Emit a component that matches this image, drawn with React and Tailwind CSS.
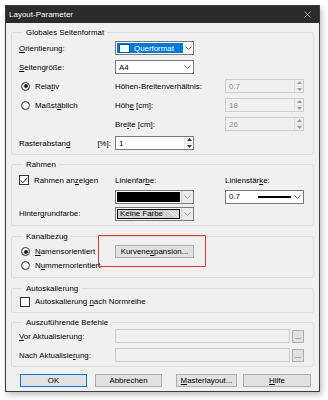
import { X } from "lucide-react";

const Chevron = ({ muted }) => (
  <svg width="7" height="4" viewBox="0 0 7 4" className="block">
    <polyline points="0.5,0.5 3.5,3.5 6.5,0.5" fill="none" stroke={muted ? "#9a9a9a" : "#606060"} strokeWidth="1" />
  </svg>
);

const Arrows = ({ disabled }) => (
  <div className={`flex h-full w-[9px] flex-col border-l ${disabled ? "border-[#dcdcdc]" : "border-[#e3e3e3]"}`}>
    <div className="flex flex-1 items-center justify-center border-b border-[#e3e3e3]">
      <svg width="5" height="3" viewBox="0 0 5 3"><polygon points="0,3 2.5,0 5,3" fill={disabled ? "#9a9a9a" : "#333"} /></svg>
    </div>
    <div className="flex flex-1 items-center justify-center">
      <svg width="5" height="3" viewBox="0 0 5 3"><polygon points="0,0 2.5,3 5,0" fill={disabled ? "#9a9a9a" : "#333"} /></svg>
    </div>
  </div>
);

const Spin = ({ value, disabled }) => (
  <div
    className={`flex h-[14px] w-[79px] items-center border ${
      disabled ? "border-[#cccccc] bg-[#f0f0f0] text-[#8d8d8d]" : "border-[#7a7a7a] bg-white text-black"
    }`}
  >
    <span className="flex-1 pl-[3px]">{value}</span>
    <Arrows disabled={disabled} />
  </div>
);

const Combo = ({ children, muted }) => (
  <div className="flex h-[14px] w-[79px] items-center border border-[#7a7a7a] bg-white">
    <div className="flex h-full flex-1 items-center p-[1px]">{children}</div>
    <div className={`flex h-full w-[12px] items-center justify-center ${muted ? "border-l border-[#cccccc] bg-[#ececec]" : ""}`}>
      <Chevron muted={muted} />
    </div>
  </div>
);

const Radio = ({ checked, children }) => (
  <div className="flex items-center gap-[5px]">
    <span className="flex h-[9px] w-[9px] items-center justify-center rounded-full border border-[#333] bg-white">
      {checked ? <span className="h-[4px] w-[4px] rounded-full bg-[#222]" /> : null}
    </span>
    <span>{children}</span>
  </div>
);

const Check = ({ checked, children }) => (
  <div className="flex items-center gap-[5px]">
    <span className="flex h-[10px] w-[10px] items-center justify-center border border-[#333] bg-white">
      {checked ? (
        <svg width="8" height="7" viewBox="0 0 8 7">
          <polyline points="0.7,3.6 2.9,5.8 7.3,0.8" fill="none" stroke="#222" strokeWidth="1" />
        </svg>
      ) : null}
    </span>
    <span>{children}</span>
  </div>
);

const Group = ({ title, className, children }) => (
  <fieldset className={`rounded-[2px] border border-[#dcdcdc] px-[7px] ${className}`}>
    <legend className="ml-[4px] px-[3px] leading-[11px]">{title}</legend>
    {children}
  </fieldset>
);

const Button = ({ children, primary, className }) => (
  <div
    className={`flex h-[13px] items-center justify-center border bg-[#e1e1e1] ${
      primary ? "border-[#0078d7]" : "border-[#adadad]"
    } ${className}`}
  >
    {children}
  </div>
);

export default function App() {
  return (
    <div className="h-[400px] w-[328px] overflow-hidden bg-white pl-[5px] pt-[5px] font-['Liberation_Sans',Arial,sans-serif] text-[7.9px] leading-[11px] text-[#000]">
      <div className="flex h-[387px] w-[315px] flex-col border border-[#3c3c3c] bg-[#f0f0f0] shadow-[2px_3px_6px_rgba(0,0,0,0.25)]">
        <div className="flex h-[17px] items-center justify-between bg-[#2b2b2b] pl-[3px] pr-[6px] text-[8px] text-white">
          <span>Layout-Parameter</span>
          <X size={11} strokeWidth={1.2} />
        </div>

        <div className="flex flex-1 flex-col px-[5px] pt-[4px]">
          <Group title="Globales Seitenformat" className="pb-[4px] pt-[3px]">
            <div className="grid grid-cols-[96px_110px_79px] grid-rows-[14px_14px_14px_14px_14px_14px] items-center gap-y-[5px]">
              <span><u>O</u>rientierung:</span>
              <Combo>
                <div className="flex h-full w-[66px] items-center gap-[4px] bg-[#0078d7] pl-[2px] text-white">
                  <span className="h-[9px] w-[11px] border border-[#005a9e] bg-white" />
                  <span>Querformat</span>
                </div>
              </Combo>
              <span />

              <span><u>S</u>eitengröße:</span>
              <Combo>
                <span className="pl-[2px]">A4</span>
              </Combo>
              <span />

              <div className="pl-[2px]">
                <Radio checked>
                  Rela<u>t</u>iv
                </Radio>
              </div>
              <span>Höhen-Breitenverhältnis:</span>
              <Spin value="0.7" disabled />

              <div className="pl-[2px]">
                <Radio>
                  Maßst<u>ä</u>blich
                </Radio>
              </div>
              <span>Höh<u>e</u> [cm]:</span>
              <Spin value="18" disabled />

              <span />
              <span>Bre<u>i</u>te [cm]:</span>
              <Spin value="26" disabled />

              <div className="flex justify-between pr-[4px]">
                <span>Rasterabstan<u>d</u></span>
                <span>[%]:</span>
              </div>
              <Spin value="1" />
              <span />
            </div>
          </Group>

          <Group title="Rahmen" className="mt-[4px] pb-[5px] pt-[4px]">
            <div className="grid grid-cols-[96px_110px_79px] grid-rows-[12px_13px_13px] items-center gap-y-[4px]">
              <Check checked>
                Rahmen an<u>z</u>eigen
              </Check>
              <span>Linienfar<u>b</u>e:</span>
              <span>Linienstär<u>k</u>e:</span>

              <span />
              <Combo muted>
                <span className="h-full w-full bg-black" />
              </Combo>
              <Combo>
                <div className="flex w-full items-center">
                  <span className="w-[31px] pl-[2px]">0.7</span>
                  <span className="h-[2px] w-[33px] bg-black" />
                </div>
              </Combo>

              <span>Hinter<u>g</u>rundfarbe:</span>
              <Combo muted>
                <span className="flex h-full w-full items-center border border-black bg-[repeating-linear-gradient(45deg,#c8c8c8_0px,#c8c8c8_1px,#e2e2e2_1px,#e2e2e2_2px)] pl-[2px]">
                  Keine Farbe
                </span>
              </Combo>
              <span />
            </div>
          </Group>

          <Group title="Kanalbezug" className="relative mt-[5px] pb-[6px] pt-[2px]">
            <div className="grid grid-cols-[96px_110px_79px] items-start">
              <div className="flex flex-col gap-[3px] pl-[2px] pt-[2px]">
                <Radio checked>
                  <u>N</u>amensorientiert
                </Radio>
                <Radio>
                  N<u>u</u>mmernorientiert
                </Radio>
              </div>
              <Button className="mt-[1px] w-[79px]">
                Kurvene<u>x</u>pansion...
              </Button>
              <span />
            </div>
            <div className="pointer-events-none absolute left-[86px] top-[-7px] h-[32px] w-[108px] rounded-[1px] border-[1.5px] border-[#e5333f]" />
          </Group>

          <Group title="Autoskalierung" className="mt-[5px] pb-[5px] pt-[2px]">
            <div className="pl-[1px]">
              <Check>
                Autoskalierung <u>n</u>ach Normreihe
              </Check>
            </div>
          </Group>

          <Group title="Auszuführende Befehle" className="mt-[4px] pb-[4px] pt-[1px]">
            <div className="grid grid-cols-[96px_177px_12px] grid-rows-[14px_14px] items-center gap-y-[5px]">
              <span><u>V</u>or Aktualisierung:</span>
              <span className="h-[14px] w-[175px] border border-[#cccccc] bg-[#f0f0f0]" />
              <Button className="h-[13px] w-[12px] text-[7px]">...</Button>

              <span>Nach Aktualisie<u>r</u>ung:</span>
              <span className="h-[14px] w-[175px] border border-[#cccccc] bg-[#f0f0f0]" />
              <Button className="h-[13px] w-[12px] text-[7px]">...</Button>
            </div>
          </Group>

          <div className="mt-[7px] flex items-center pl-[9px]">
            <Button primary className="w-[67px]">OK</Button>
            <Button className="ml-[8px] w-[67px]">Abbrechen</Button>
            <Button className="ml-[14px] w-[61px]">
              <u>M</u>asterlayout...
            </Button>
            <Button className="ml-[6px] w-[68px]">
              <u>H</u>ilfe
            </Button>
          </div>
        </div>
      </div>
    </div>
  );
}
